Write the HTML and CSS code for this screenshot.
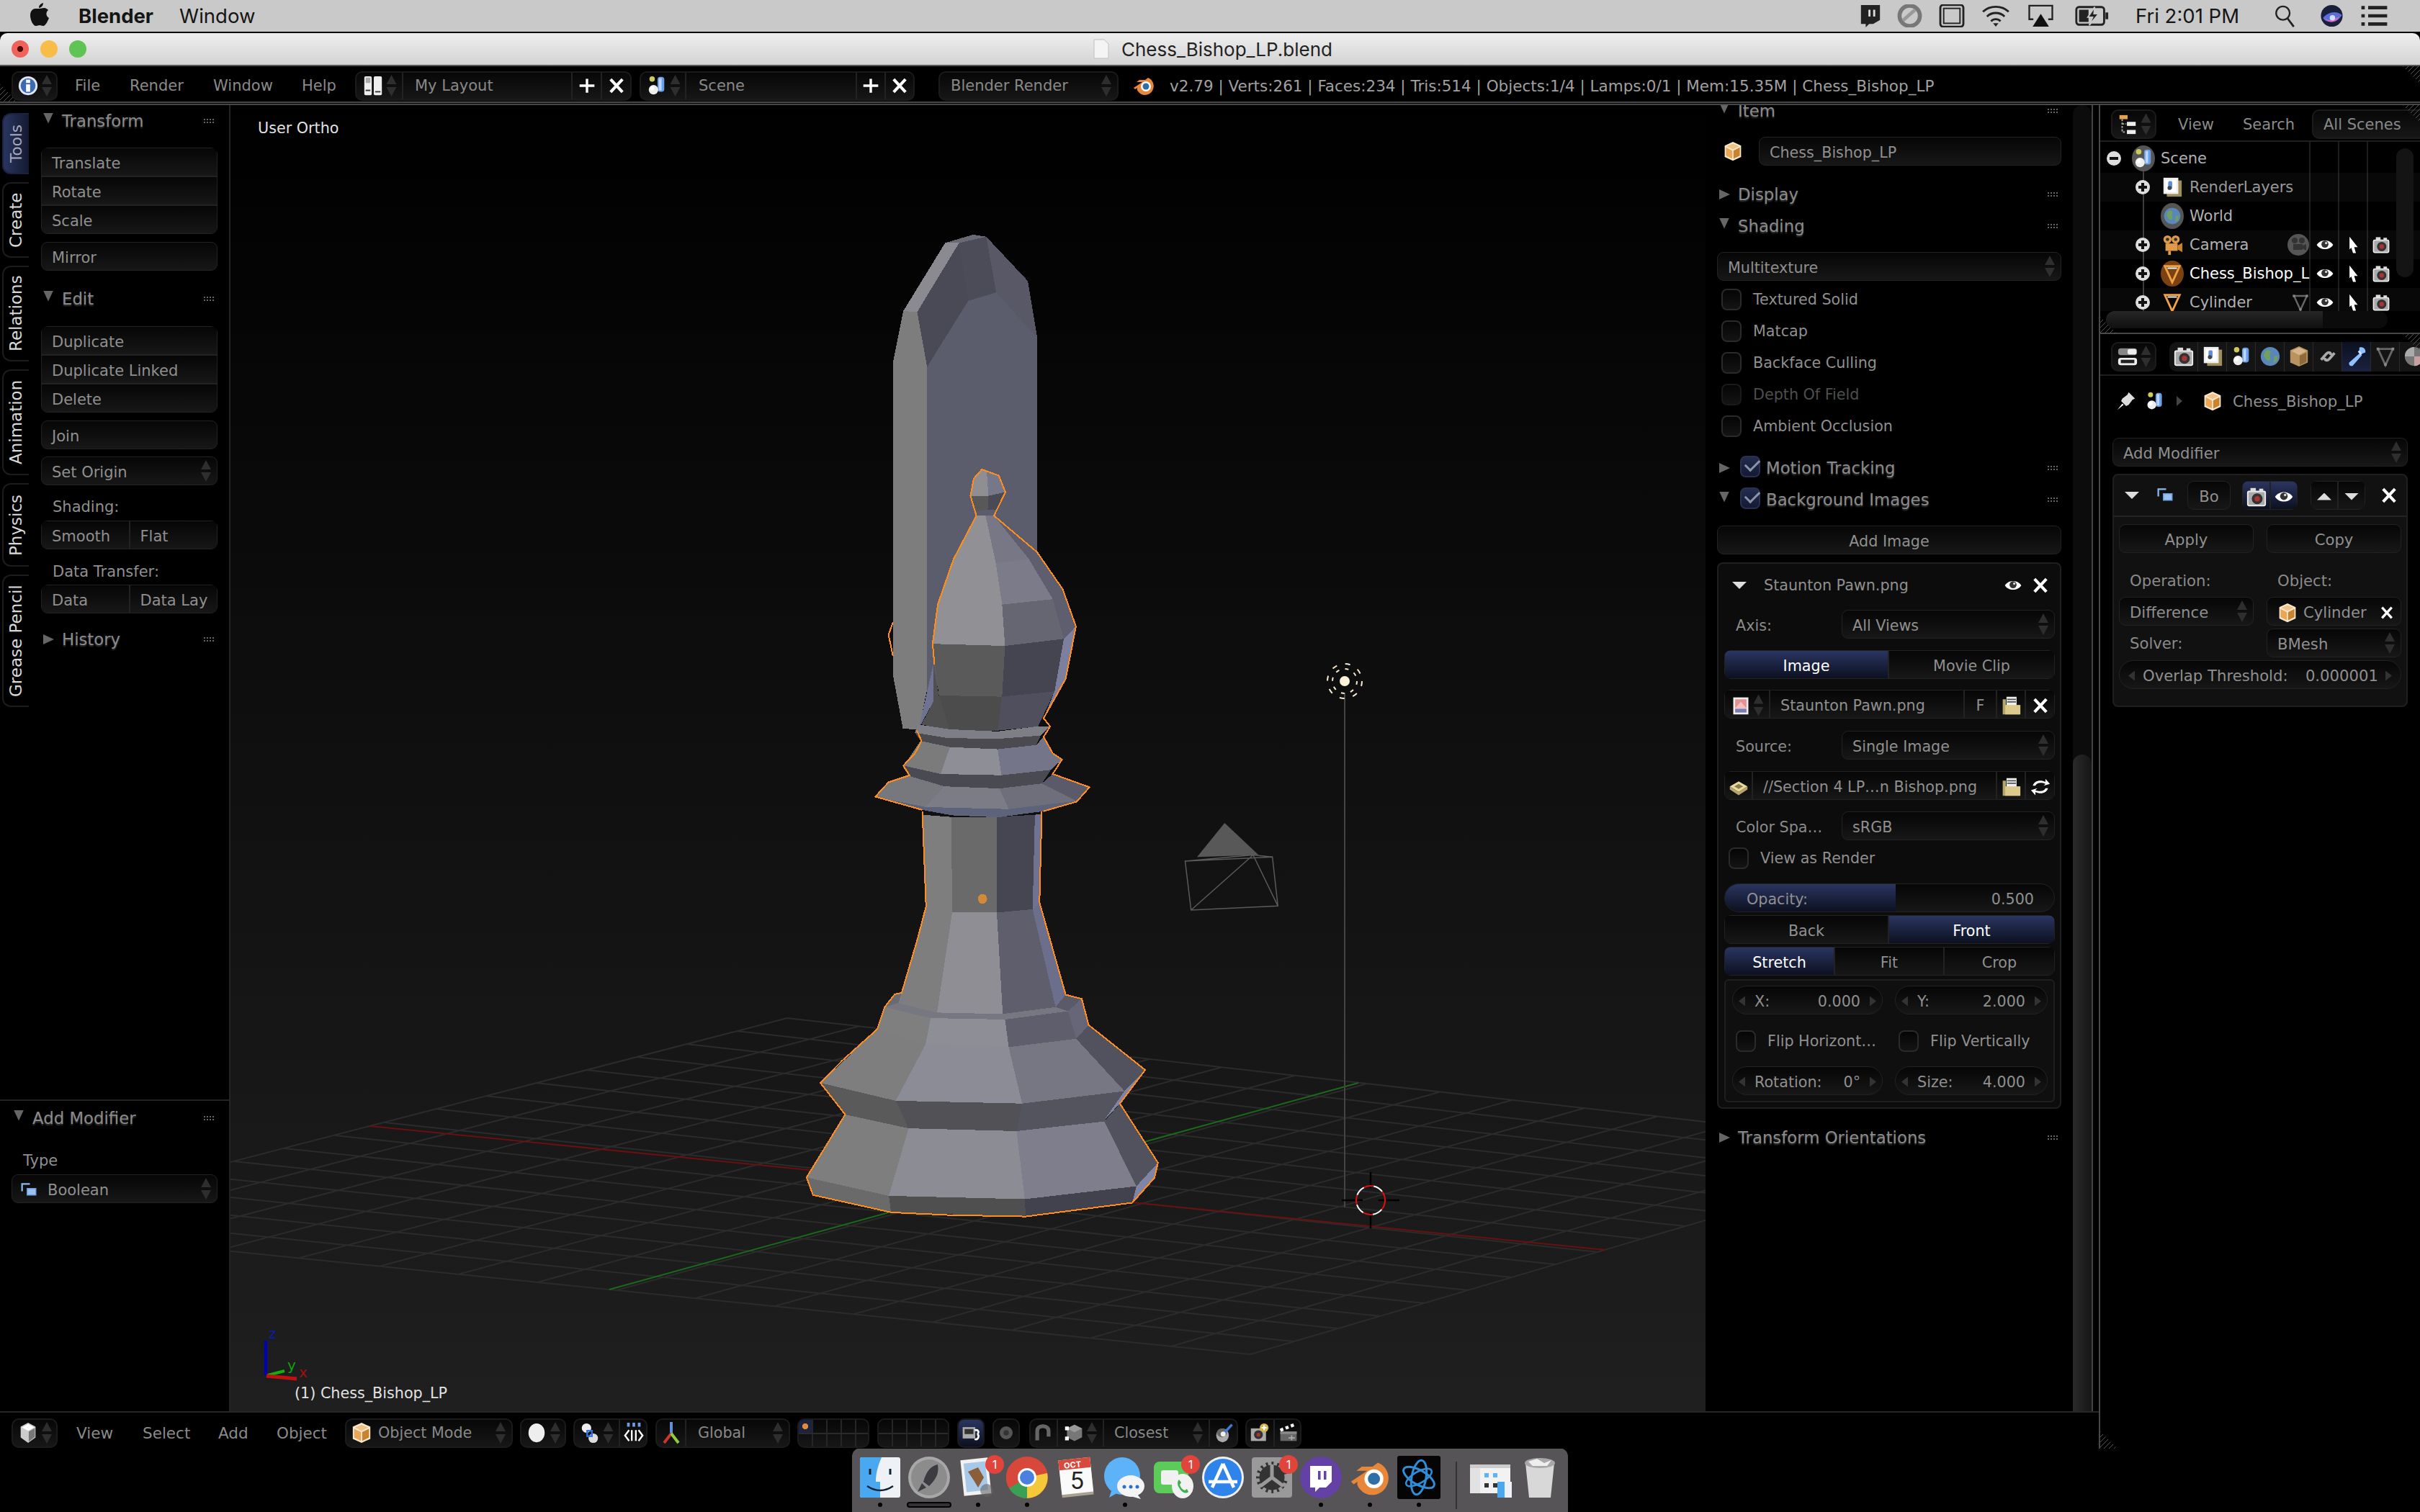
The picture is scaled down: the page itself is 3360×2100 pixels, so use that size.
FILE: index.html
```html
<!DOCTYPE html>
<html lang="en">
<head>
<meta charset="utf-8">
<title>Chess_Bishop_LP.blend</title>
<link rel="stylesheet" href="styles.css">
</head>
<body>
<svg class="defs" width="0" height="0" aria-hidden="true">
  <symbol id="s-cube" viewBox="0 0 32 32"><polygon points="16,1 29,7 29,25 16,31 3,25 3,7" fill="#f6e7cf"/><polygon points="16,4 26,8 16,13 6,8" fill="#f2c387"/><polygon points="5,10 15,15 15,28 5,23" fill="#eaa557"/><polygon points="17,15 27,10 27,23 17,28" fill="#c9832f"/></symbol>
  <symbol id="s-eye" viewBox="0 0 32 32"><path d="M2 16C8 6 24 6 30 16C24 26 8 26 2 16Z" fill="#fff"/><circle cx="16" cy="15" r="6" fill="#333"/><circle cx="18" cy="13" r="2" fill="#ddd"/></symbol>
  <symbol id="s-x" viewBox="0 0 32 32"><path d="M4 3L28 29M28 3L4 29" stroke="#fff" stroke-width="6"/></symbol>
  <symbol id="s-plus" viewBox="0 0 32 32"><path d="M16 2V30M1 16H31" stroke="#fff" stroke-width="5"/></symbol>
  <symbol id="s-cursor" viewBox="0 0 32 32"><path d="M10 2L24 20L18 20L21 30L16 30L13 21L10 24Z" fill="#fff"/></symbol>
  <symbol id="s-cam" viewBox="0 0 32 32"><rect x="3" y="8" width="26" height="21" rx="2" fill="#aaa" stroke="#eee" stroke-width="2"/><rect x="7" y="3" width="8" height="5" fill="#ddd"/><rect x="20" y="4" width="6" height="4" fill="#ddd"/><circle cx="17" cy="19" r="8" fill="#333"/><circle cx="17" cy="19" r="4" fill="#a33"/></symbol>
  <symbol id="s-scene" viewBox="0 0 32 32"><circle cx="9" cy="6" r="4" fill="#cfc95a"/><rect x="17" y="3" width="10" height="22" rx="4" fill="#6b9ee6"/><rect x="19" y="5" width="4" height="18" fill="#bcd6fa"/><circle cx="11" cy="22" r="7" fill="#eee"/><circle cx="9" cy="20" r="3" fill="#fff"/></symbol>
  <symbol id="s-layers" viewBox="0 0 32 32"><rect x="8" y="6" width="22" height="24" fill="#a08f5c"/><rect x="3" y="2" width="22" height="24" fill="#eee"/><rect x="6" y="5" width="16" height="18" fill="#fff"/><rect x="10" y="7" width="6" height="12" rx="2" fill="#5f8fda"/><circle cx="12" cy="17" r="3" fill="#444"/></symbol>
  <symbol id="s-world" viewBox="0 0 32 32"><circle cx="16" cy="16" r="14" fill="#5a86b8"/><path d="M9 8C14 5 18 8 16 12C14 15 18 17 15 22C12 24 8 18 6 14Z" fill="#6fa05f"/><path d="M22 16L27 15L26 23L21 26Z" fill="#6fa05f"/></symbol>
  <symbol id="s-mcam" viewBox="0 0 32 32"><circle cx="9" cy="8" r="6" fill="#e09a4c"/><circle cx="21" cy="8" r="6" fill="#e09a4c"/><circle cx="9" cy="8" r="2.5" fill="#333"/><circle cx="21" cy="8" r="2.5" fill="#333"/><rect x="6" y="14" width="18" height="11" fill="#e09a4c"/><path d="M24 17L31 13V27L24 23Z" fill="#c9832f"/><rect x="10" y="25" width="4" height="6" fill="#e09a4c"/></symbol>
  <symbol id="s-gcam" viewBox="0 0 32 32"><circle cx="16" cy="16" r="15" fill="#555"/><circle cx="11" cy="10" r="4" fill="#333"/><circle cx="21" cy="10" r="4" fill="#333"/><rect x="9" y="15" width="13" height="8" fill="#333"/><path d="M22 17L27 15V24L22 21Z" fill="#333"/></symbol>
  <symbol id="s-mesh" viewBox="0 0 32 32"><path d="M5 5H27L16 29Z" fill="none" stroke="#f0a045" stroke-width="3"/><path d="M9 8H23" stroke="#fff" stroke-width="2"/></symbol>
  <symbol id="s-gmesh" viewBox="0 0 32 32"><path d="M5 5H27L16 29Z" fill="none" stroke="#666" stroke-width="3"/><rect x="3" y="3" width="4" height="4" fill="#888"/><rect x="25" y="3" width="4" height="4" fill="#888"/><rect x="14" y="26" width="4" height="4" fill="#888"/></symbol>
  <symbol id="s-outl" viewBox="0 0 32 32"><rect x="4" y="2" width="12" height="6" fill="#e8a24c"/><path d="M8 8V27H14M8 15H14" stroke="#aaa" stroke-width="2" stroke-dasharray="3 2" fill="none"/><rect x="15" y="12" width="13" height="6" fill="#eee"/><rect x="15" y="24" width="13" height="6" fill="#eee"/></symbol>
  <symbol id="s-editor" viewBox="0 0 32 32"><rect x="2" y="4" width="28" height="10" rx="4" fill="#888"/><rect x="16" y="5" width="13" height="8" rx="3" fill="#eee"/><rect x="2" y="18" width="28" height="11" rx="4" fill="#eee"/><rect x="6" y="21" width="20" height="5" fill="#222"/></symbol>
  <symbol id="s-bool" viewBox="0 0 32 32"><path d="M2 6V3H18V6H5V18H2Z" fill="#8db8f0"/><rect x="12" y="12" width="18" height="14" fill="#6f9be0"/><rect x="14" y="14" width="14" height="10" fill="#9cc0f0"/></symbol>
  <symbol id="s-folder" viewBox="0 0 32 32"><rect x="9" y="2" width="16" height="14" fill="#eee"/><path d="M3 6H8V26H30V30H3Z" fill="#b7a56a"/><rect x="7" y="15" width="24" height="15" fill="#dcca8c"/><path d="M10 6H24M10 10H24" stroke="#555" stroke-width="2"/></symbol>
  <symbol id="s-refresh" viewBox="0 0 32 32"><path d="M4 14C6 6 16 4 24 8V3L31 11L21 14L24 11C17 8 10 9 8 14Z" fill="#fff"/><path d="M28 18C26 26 16 28 8 24V29L1 21L11 18L8 21C15 24 22 23 24 18Z" fill="#fff"/></symbol>
  <symbol id="s-img" viewBox="0 0 32 32"><rect x="4" y="3" width="24" height="27" fill="#eee"/><rect x="7" y="6" width="18" height="14" fill="#e88f8f"/><path d="M7 20L16 10L25 20Z" fill="#f2c0c0"/><rect x="7" y="21" width="18" height="6" fill="#7c7cb0"/></symbol>
  <symbol id="s-box" viewBox="0 0 32 32"><path d="M2 15L16 7L30 15L16 24Z" fill="#e8d9a0"/><path d="M2 15L16 24V29L2 20ZM30 15L16 24V29L30 20Z" fill="#b7a56a"/><path d="M9 15L16 11L23 15L16 19Z" fill="#8a7c4c"/></symbol>
  <symbol id="s-pin" viewBox="0 0 32 32"><path d="M20 2L30 12L26 14L20 22L16 24L8 16L10 12L18 6Z" fill="#ddd"/><path d="M10 20L2 30L12 22Z" fill="#fff"/></symbol>
  <symbol id="s-link" viewBox="0 0 32 32"><path d="M6 21L14 12C17 9 21 10 20 14M26 11L18 20C15 23 11 22 12 18" stroke="#aaa" stroke-width="4" fill="none"/></symbol>
  <symbol id="s-wrench" viewBox="0 0 32 32"><path d="M20 3C25 1 30 5 29 10L24 12L20 8ZM21 11L24 14L10 30C6 31 4 28 5 25Z" fill="#8fc0ff"/><path d="M19 8L23 13" stroke="#cfe4ff" stroke-width="3"/></symbol>
  <symbol id="s-mat" viewBox="0 0 32 32"><circle cx="16" cy="16" r="14" fill="#777"/><path d="M16 16H30A14 14 0 0 1 16 30Z" fill="#c9a0a0"/><path d="M16 16V2A14 14 0 0 0 2 16Z" fill="#aaa"/></symbol>
  <symbol id="s-gbox" viewBox="0 0 32 32"><polygon points="16,1 29,7 29,25 16,31 3,25 3,7" fill="#b8935f"/><polygon points="16,3 27,8 16,14 5,8" fill="#d6b58a"/><polygon points="17,15 27,10 27,24 17,29" fill="#8d6a3c"/></symbol>
  <symbol id="s-solid" viewBox="0 0 32 32"><polygon points="16,1 27,7 27,23 16,31 5,23 5,7" fill="#ccc"/><polygon points="16,3 25,8 16,13 7,8" fill="#fff"/><polygon points="17,14 26,9 26,22 17,29" fill="#777"/></symbol>
  <symbol id="s-ball" viewBox="0 0 32 32"><ellipse cx="16" cy="16" rx="12" ry="14" fill="#eee"/></symbol>
  <symbol id="s-pivot" viewBox="0 0 32 32"><circle cx="11" cy="9" r="7" fill="#eee"/><circle cx="21" cy="24" r="7" fill="#ddd"/><rect x="12" y="13" width="7" height="8" fill="none" stroke="#2f72e0" stroke-width="2.5"/></symbol>
  <symbol id="s-manip" viewBox="0 0 32 32"><rect x="6" y="1" width="4" height="6" fill="#6f9be0"/><rect x="14" y="1" width="4" height="6" fill="#6f9be0"/><rect x="22" y="1" width="4" height="6" fill="#6f9be0"/><path d="M9 12L3 20L9 28M23 12L29 20L23 28M13 12V28M19 12V28" stroke="#fff" stroke-width="2.5" fill="none"/></symbol>
  <symbol id="s-axes" viewBox="0 0 32 32"><path d="M16 1V17" stroke="#5f8fda" stroke-width="4"/><path d="M16 17L6 30" stroke="#c9362e" stroke-width="4"/><path d="M16 17L26 30" stroke="#8fcf3f" stroke-width="4"/></symbol>
  <symbol id="s-lock" viewBox="0 0 32 32"><rect x="3" y="7" width="20" height="18" fill="#aaa"/><rect x="6" y="10" width="14" height="8" fill="#333"/><path d="M22 12C28 10 30 16 26 18M26 18C30 20 28 28 22 26" stroke="#fff" stroke-width="3" fill="none"/></symbol>
  <symbol id="s-dot" viewBox="0 0 32 32"><circle cx="16" cy="16" r="12" fill="#555"/><circle cx="16" cy="16" r="5" fill="#333"/></symbol>
  <symbol id="s-magnet" viewBox="0 0 32 32"><path d="M7 28V13C7 3 25 3 25 13V22" stroke="#666" stroke-width="6" fill="none"/></symbol>
  <symbol id="s-snap" viewBox="0 0 32 32"><polygon points="17,3 29,9 29,23 17,29 5,23 5,9" fill="#777"/><polygon points="17,3 29,9 17,15 5,9" fill="#999"/><rect x="2" y="6" width="6" height="6" fill="#fff"/><rect x="2" y="22" width="6" height="6" fill="#fff"/></symbol>
  <symbol id="s-proj" viewBox="0 0 32 32"><ellipse cx="13" cy="20" rx="10" ry="11" fill="#aaa"/><ellipse cx="12" cy="16" rx="8" ry="7" fill="#666"/><path d="M14 18L28 3" stroke="#3f7ad8" stroke-width="4"/><circle cx="14" cy="18" r="4" fill="#eee"/></symbol>
  <symbol id="s-rcam" viewBox="0 0 32 32"><rect x="2" y="9" width="24" height="20" fill="#aaa"/><circle cx="14" cy="19" r="7" fill="#333"/><circle cx="14" cy="19" r="3" fill="#a33"/><circle cx="23" cy="8" r="7" fill="#d8b545"/><path d="M23 4V12M19 8H27" stroke="#fff" stroke-width="2.5"/></symbol>
  <symbol id="s-clap" viewBox="0 0 32 32"><path d="M3 12L28 2" stroke="#fff" stroke-width="5" stroke-dasharray="5 4"/><rect x="3" y="14" width="26" height="15" fill="#666"/><rect x="3" y="14" width="26" height="4" fill="#888"/><path d="M16 24H26M21 20V28" stroke="#aaa" stroke-width="2"/></symbol>
  <symbol id="s-blender" viewBox="0 0 32 32"><path d="M2 19L14 11H6L10 8H18L22 5C29 8 32 16 28 23C24 30 14 31 9 25C7 23 6 21 7 19L4 21Z" fill="#e8873a"/><circle cx="19" cy="17" r="7" fill="#fff"/><circle cx="19" cy="17" r="4.5" fill="#2f6fa8"/></symbol>
  <symbol id="s-layout" viewBox="0 0 32 32"><rect x="3" y="2" width="11" height="28" rx="2" fill="#eee"/><rect x="17" y="2" width="12" height="28" rx="2" fill="#eee"/><rect x="5" y="4" width="7" height="8" fill="#aaa"/><rect x="5" y="22" width="7" height="2" fill="#333"/><rect x="19" y="24" width="8" height="2" fill="#333"/></symbol>
  <symbol id="s-info" viewBox="0 0 32 32"><circle cx="16" cy="16" r="14" fill="#dfe8f8"/><circle cx="16" cy="16" r="11" fill="#3d6ab0"/><rect x="13" y="14" width="6" height="11" fill="#fff"/><rect x="13" y="7" width="6" height="5" fill="#fff"/></symbol>
</svg>

<div class="screen">
  <header class="macbar">
    <svg class="apple" viewBox="0 0 26 32"><path d="M18 0C18 4 15 7 12 7C12 3 15 1 18 0ZM13 8C15 8 17 7 19 7C22 7 24 9 25 10C21 13 22 19 26 21C24 26 21 32 18 32C16 32 15 31 13 31C11 31 10 32 8 32C4 32 0 24 0 17C0 11 4 8 7 8C9 8 11 8 13 8Z" fill="#111"/></svg>
    <span class="mac-app">Blender</span>
    <span class="mac-item">Window</span>
    <div class="mac-right">
      <svg class="st st-twitch" viewBox="0 0 30 34"><path d="M1 1H29V23L19 29H13L8 34V29H1Z" fill="#222"/><rect x="12" y="8" width="3" height="10" fill="#ddd"/><rect x="19" y="8" width="3" height="10" fill="#ddd"/></svg>
      <svg class="st st-cc" viewBox="0 0 40 34"><circle cx="20" cy="17" r="15" fill="none" stroke="#777" stroke-width="6"/><path d="M10 24L28 8" stroke="#999" stroke-width="5"/></svg>
      <svg class="st st-tab" viewBox="0 0 36 34"><rect x="1" y="1" width="34" height="32" rx="4" fill="none" stroke="#222" stroke-width="3"/><rect x="6" y="6" width="24" height="22" fill="none" stroke="#222" stroke-width="2"/></svg>
      <svg class="st st-wifi" viewBox="0 0 42 34"><path d="M2 11C12 1 30 1 40 11M8 18C15 11 27 11 34 18M14 25C18 21 24 21 28 25" fill="none" stroke="#222" stroke-width="3"/><path d="M21 33L17 28H25Z" fill="#222"/></svg>
      <svg class="st st-air" viewBox="0 0 38 34"><path d="M8 22H2V2H36V22H30" fill="none" stroke="#222" stroke-width="2.5"/><path d="M19 14L31 33H7Z" fill="#111"/></svg>
      <svg class="st st-bat" viewBox="0 0 48 34"><rect x="1" y="4" width="41" height="26" rx="4" fill="none" stroke="#222" stroke-width="3"/><path d="M44 12V22H48V12Z" fill="#222"/><rect x="5" y="8" width="14" height="18" fill="#222"/><path d="M28 4L18 19H25L20 31L34 14H27Z" fill="#222" stroke="#c8c8c8" stroke-width="2"/></svg>
      <span class="mac-clock">Fri 2:01 PM</span>
      <svg class="st st-search" viewBox="0 0 30 34"><circle cx="12" cy="13" r="10" fill="none" stroke="#222" stroke-width="2.5"/><path d="M19 21L28 33" stroke="#222" stroke-width="3"/></svg>
      <svg class="st st-siri" viewBox="0 0 34 34"><ellipse cx="17" cy="17" rx="16" ry="16" fill="#1a1f3c"/><path d="M4 20C10 12 24 8 32 16C28 22 24 26 16 26C10 26 6 24 4 20Z" fill="#5a6ed8"/><path d="M6 20C12 26 20 22 28 18C26 26 12 30 6 20Z" fill="#d868c0"/><circle cx="18" cy="20" r="4" fill="#cfe0ff"/></svg>
      <svg class="st st-list" viewBox="0 0 38 34"><path d="M0 5H5M10 5H38M0 17H5M10 17H38M0 29H5M10 29H38" stroke="#222" stroke-width="5"/></svg>
    </div>
  </header>

  <div class="titlebar">
    <div class="lights"><i class="light red"></i><i class="light yellow"></i><i class="light green"></i></div>
    <div class="title"><svg class="docicon" viewBox="0 0 24 28"><path d="M2 1H16L22 7V27H2Z" fill="#f4f4f4" stroke="#c0c0c0"/></svg><span>Chess_Bishop_LP.blend</span></div>
  </div>

  <div class="infobar hdr">
    <span class="hatch hatch-tl"></span>
    <div class="hbox w64 ml16"><svg class="ic30"><use href="#s-info"/></svg><i class="ud"></i></div>
    <div class="menu ml24"><span class="w76">File</span><span class="w116">Render</span><span class="w123">Window</span><span class="w74">Help</span></div>
    <div class="hbox w384">
      <span class="cell w63"><svg class="ic30"><use href="#s-layout"/></svg><i class="ud"></i></span>
      <span class="cell grow pl16">My Layout</span>
      <span class="cell w41"><svg class="ic22"><use href="#s-plus"/></svg></span>
      <span class="cell w41"><svg class="ic22"><use href="#s-x"/></svg></span>
    </div>
    <div class="hbox w382 ml11">
      <span class="cell w61"><svg class="ic30"><use href="#s-scene"/></svg><i class="ud"></i></span>
      <span class="cell grow pl17">Scene</span>
      <span class="cell w40"><svg class="ic22"><use href="#s-plus"/></svg></span>
      <span class="cell w40"><svg class="ic22"><use href="#s-x"/></svg></span>
    </div>
    <div class="hbox w250 ml33 pl15">Blender Render<i class="ud ud-r"></i></div>
    <svg class="ic32 ml19"><use href="#s-blender"/></svg>
    <span class="status">v2.79 | Verts:261 | Faces:234 | Tris:514 | Objects:1/4 | Lamps:0/1 | Mem:15.35M | Chess_Bishop_LP</span>
    <span class="hatch hatch-tr"></span>
  </div>

  <div class="workspace">
    <div class="leftblock">
      <div class="upper">
        <div class="toolcol">
          <div class="toolmain">
            <nav class="tabs">
              <span class="tab tab-on h85">Tools</span>
              <span class="tab h105">Create</span>
              <span class="tab h133">Relations</span>
              <span class="tab h147">Animation</span>
              <span class="tab h116">Physics</span>
              <span class="tab h184">Grease Pencil</span>
            </nav>
            <div class="shelf">
              <div class="hd"><i class="tri-d"></i><span>Transform</span><i class="grip"></i></div>
              <div class="stack mt15"><div class="b">Translate</div><div class="b">Rotate</div><div class="b">Scale</div></div>
              <div class="b solo mt11">Mirror</div>
              <div class="hd mt17"><i class="tri-d"></i><span>Edit</span><i class="grip"></i></div>
              <div class="stack mt16"><div class="b">Duplicate</div><div class="b">Duplicate Linked</div><div class="b">Delete</div></div>
              <div class="b solo mt11">Join</div>
              <div class="b solo mt10">Set Origin<i class="ud ud-r"></i></div>
              <div class="lab mt14">Shading:</div>
              <div class="pair mt3"><div class="b">Smooth</div><div class="b">Flat</div></div>
              <div class="lab mt15">Data Transfer:</div>
              <div class="pair mt2"><div class="b">Data</div><div class="b">Data Lay</div></div>
              <div class="hd mt14"><i class="tri-r"></i><span>History</span><i class="grip"></i></div>
            </div>
          </div>
          <div class="oppanel">
            <div class="hd"><i class="tri-d"></i><span>Add Modifier</span><i class="grip"></i></div>
            <div class="lab mt21">Type</div>
            <div class="b solo mt3 opcombo"><svg class="ic24 mr14"><use href="#s-bool"/></svg>Boolean<i class="ud ud-r"></i></div>
          </div>
        </div>

        <main class="viewport">
          <svg class="scene3d" viewBox="320 146 2048 1816" width="2048" height="1816">
            <path class="grid" d="M-24 1703L1736 1881M46 1685L1796 1863M116 1667L1857 1845M185 1649L1917 1828M255 1631L1978 1810M325 1613L2038 1792M395 1595L2098 1774M465 1577L2159 1756M534 1559L2219 1739M604 1540L2280 1721M674 1522L2340 1703M744 1504L2400 1685M814 1486L2461 1667M883 1468L2521 1650M953 1450L2582 1632M1023 1432L2642 1614M1093 1414L2703 1596M-24 1703L1093 1414M86 1714L1194 1425M196 1725L1294 1437M306 1736L1395 1448M416 1747L1495 1460M526 1759L1596 1471M636 1770L1697 1482M746 1781L1797 1494M856 1792L1898 1505M966 1803L1998 1517M1076 1814L2099 1528M1186 1825L2200 1539M1296 1836L2300 1551M1406 1847L2401 1562M1516 1858L2501 1574M1626 1870L2602 1585M1736 1881L2703 1596"/>
            <path class="axis-r" d="M514 1564L2229 1736"/>
            <path class="axis-g" d="M846 1791L1886 1504"/>

            <!-- stem and base -->
            <g transform="translate(1000 1150) scale(0.6378 0.3827)" shape-rendering="crispEdges">
              <polygon fill="#7e7e7e" points="440,-48 503,-40 505,305 448,285"/>
              <polygon fill="#6a6a6a" points="503,-40 602,-40 602,307 505,305"/>
              <polygon fill="#464652" points="602,-40 685,-48 680,295 602,307"/>
              <polygon fill="#6f7391" points="685,-48 700,-50 695,270 680,295"/>
              <polygon fill="#7e7e7e" points="448,285 505,305 472,670 388,635"/>
              <polygon fill="#8e8e94" points="505,305 602,307 615,675 472,670"/>
              <polygon fill="#5e5e6c" points="602,307 680,295 730,650 615,675"/>
              <polygon fill="#6b6f8c" points="680,295 695,270 752,605 730,650"/>
              <polygon fill="#777782" points="388,635 472,670 615,675 730,650 757,665 620,695 458,690 358,650"/>
              <polygon fill="#6a6a72" points="380,603 395,598 388,635 358,650"/>
              <polygon fill="#5a5a68" points="752,605 787,620 757,665 730,650"/>
              <polygon fill="#7f7f7f" points="358,650 458,690 447,785 342,730"/>
              <polygon fill="#8e8e96" points="458,690 620,695 628,795 447,785"/>
              <polygon fill="#5e5e6c" points="620,695 757,665 775,765 628,795"/>
              <polygon fill="#666678" points="757,665 787,620 802,715 775,765"/>
              <polygon fill="#7e7e7e" points="342,730 447,785 382,990 218,925"/>
              <polygon fill="#8c8c96" points="447,785 628,795 657,1000 382,990"/>
              <polygon fill="#777784" points="628,795 775,765 880,955 657,1000"/>
              <polygon fill="#52525f" points="775,765 802,715 925,878 880,955"/>
              <polygon fill="#5a5a5a" points="218,925 382,990 410,1090 272,1040"/>
              <polygon fill="#515156" points="382,990 657,1000 645,1100 410,1090"/>
              <polygon fill="#54545f" points="657,1000 880,955 836,1065 645,1100"/>
              <polygon fill="#8085a5" points="925,878 880,955 836,1060 870,1000"/>
              <polygon fill="#7e7e7e" points="272,1040 410,1090 367,1335 188,1268"/>
              <polygon fill="#8c8c94" points="410,1090 645,1100 663,1347 367,1335"/>
              <polygon fill="#7e7e8c" points="645,1100 836,1065 906,1300 663,1347"/>
              <polygon fill="#52525f" points="836,1065 870,1000 953,1215 906,1300"/>
              <polygon fill="#6a6a6a" points="188,1268 367,1335 372,1395 202,1332"/>
              <polygon fill="#4f4f4f" points="367,1335 663,1347 665,1410 372,1395"/>
              <polygon fill="#42424e" points="663,1347 906,1300 897,1360 665,1410"/>
              <polygon fill="#8085a5" points="906,1300 953,1215 945,1270 897,1360"/>
              <polyline class="outline" points="440,-60 448,285 430,400 395,598 380,603 358,650 342,730 265,845 218,925 272,1040 188,1268 202,1332 372,1395 500,1405 665,1410 897,1360 945,1270 953,1215 870,1000 925,878 802,715 787,620 752,605 695,270 700,-60"/>
              <ellipse cx="571" cy="257" rx="10" ry="18" fill="#d08a3a"/>
            </g>

            <!-- back object and head -->
            <g transform="translate(1000 280) scale(0.5102 0.574)" shape-rendering="crispEdges">
              <polygon fill="#7d7d7d" points="498,265 536,267 563,400 563,1180 540,1278 497,1275 470,1145 470,390"/>
              <polygon fill="#8a8a90" points="612,100 650,100 536,267 498,265"/>
              <polygon fill="#6a6a75" points="612,100 688,80 724,85 650,100"/>
              <polygon fill="#4a4a56" points="650,100 675,240 563,400 536,267"/>
              <polygon fill="#4c4c58" points="650,100 724,85 751,220 675,240"/>
              <polygon fill="#585866" points="724,85 837,192 863,330 751,220"/>
              <polygon fill="#5c5d6c" points="675,240 751,220 863,330 863,900 563,1200 563,400"/>
              <polyline class="outline" points="470,1018 458,1048 470,1100"/>
              <polygon fill="#8e8e93" points="712,650 725,650 730,712 681,712 690,670"/>
              <polygon fill="#77778a" points="725,650 758,663 776,703 730,712"/>
              <polygon fill="#585858" points="681,712 730,712 728,745 697,750"/>
              <polygon fill="#4a4a56" points="730,712 776,703 755,745 728,745"/>
              <polygon fill="#909095" points="697,760 722,760 752,875 767,975 775,1075 578,1070 592,975 635,865"/>
              <polygon fill="#777785" points="722,760 745,760 862,848 840,865 750,875"/>
              <polygon fill="#7b7b89" points="750,875 840,865 905,962 767,975"/>
              <polygon fill="#666672" points="767,975 905,962 935,1058 775,1075"/>
              <polygon fill="#5e5e6e" points="745,760 862,848 932,938 968,1028 935,1058 905,962 840,865"/>
              <polygon fill="#5a5a5a" points="578,1070 775,1075 767,1198 595,1195"/>
              <polygon fill="#454552" points="775,1075 935,1058 910,1185 767,1198"/>
              <polygon fill="#7c7f9e" points="968,1028 935,1058 910,1185 880,1250 940,1155"/>
              <polygon fill="#6f7391" points="580,1120 540,1275 580,1210"/>
              <polygon fill="#505050" points="580,1120 595,1195 625,1280 548,1265 580,1210"/>
              <polygon fill="#4c4c4c" points="595,1195 767,1198 755,1280 625,1280"/>
              <polygon fill="#4f4f5d" points="767,1198 910,1185 865,1270 755,1280"/>
              <polygon fill="#7e7e86" points="537,1265 625,1277 755,1282 860,1270 898,1270 872,1292 755,1300 618,1298 530,1285"/>
              <polygon fill="#4b4b4f" points="530,1285 618,1298 755,1300 872,1292 860,1315 755,1325 625,1320 545,1305"/>
              <polygon fill="#7b7b7b" points="545,1305 625,1320 600,1385 500,1365"/>
              <polygon fill="#8e8e96" points="625,1320 755,1325 765,1388 600,1385"/>
              <polygon fill="#75758a" points="755,1325 860,1315 880,1295 905,1335 930,1350 900,1375 765,1388"/>
              <polygon fill="#4a4a52" points="500,1365 600,1385 765,1388 900,1375 875,1408 760,1420 610,1415 515,1395"/>
              <polygon fill="#77777e" points="422,1440 458,1405 515,1390 610,1415 558,1465"/>
              <polygon fill="#7c7c86" points="610,1415 760,1420 785,1470 558,1465"/>
              <polygon fill="#6f6f7c" points="760,1420 875,1408 970,1450 785,1470"/>
              <polygon fill="#5a5a6a" points="875,1408 905,1385 1005,1417 970,1450"/>
              <polygon fill="#5e637c" points="422,1440 558,1465 785,1470 970,1450 880,1475 755,1490 630,1485 550,1472"/>
              <polyline class="outline" points="697,760 635,865 592,975 578,1070 583,1120"/>
              <polyline class="outline" points="697,760 681,712 690,670 712,648 758,663 776,703 745,760 862,848 932,938 968,1028 940,1155 880,1250 898,1270 880,1295 905,1335 930,1350 905,1385 1005,1417 970,1452 880,1475"/>
              <polyline class="outline" points="535,1280 548,1305 530,1335 498,1365 515,1388 458,1405 422,1440 550,1472"/>
            </g>

            <!-- camera -->
            <g transform="translate(1000 1150) scale(0.6378 0.3827)">
              <polygon fill="#585858" points="1098,-18 1038,105 1172,98"/>
              <path class="wire" d="M1012 120L1202 105L1214 283L1025 298ZM1160 98L1025 298M1160 98L1214 283M1160 98L1012 120M1160 98L1202 105"/>
            </g>

            <!-- lamp -->
            <path class="lampline" d="M1867 962V1677"/>
            <circle class="sun-in" cx="1867" cy="946" r="17"/>
            <circle class="sun-out" cx="1867" cy="946" r="24"/>
            <circle cx="1867" cy="946" r="7" fill="#fff3dc"/>

            <!-- 3d cursor -->
            <path class="cross" d="M1903 1628V1650M1903 1684V1706M1863 1667H1892M1914 1667H1943"/>
            <circle class="cur-r" cx="1903" cy="1667" r="20"/>
            <circle class="cur-w" cx="1903" cy="1667" r="20"/>

            <!-- gizmo -->
            <path class="gz-b" d="M369 1910V1862"/>
            <path class="gz-g" d="M372 1910L395 1904"/>
            <path class="gz-r" d="M370 1911L412 1915"/>
          </svg>
          <span class="vp-text vp-mode">User Ortho</span>
          <span class="vp-text vp-obj">(1) Chess_Bishop_LP</span>
          <span class="gz-l gz-lx">x</span>
          <span class="gz-l gz-ly">y</span>
          <span class="gz-l gz-lz">z</span>
        </main>

        <section class="npanel">
          <div class="hd nudge"><i class="tri-d"></i><span>Item</span><i class="grip"></i></div>
          <div class="namerow mt14"><svg class="ic28"><use href="#s-cube"/></svg><div class="b solo field">Chess_Bishop_LP</div></div>
          <div class="hd mt18"><i class="tri-r"></i><span>Display</span><i class="grip"></i></div>
          <div class="hd"><i class="tri-d"></i><span>Shading</span><i class="grip"></i></div>
          <div class="b solo mt14">Multitexture<i class="ud ud-r"></i></div>
          <div class="chk mt4"><i class="box"></i>Textured Solid</div>
          <div class="chk"><i class="box"></i>Matcap</div>
          <div class="chk"><i class="box"></i>Backface Culling</div>
          <div class="chk dim"><i class="box"></i>Depth Of Field</div>
          <div class="chk"><i class="box"></i>Ambient Occlusion</div>
          <div class="hd mt14"><i class="tri-r"></i><i class="box on"></i><span>Motion Tracking</span><i class="grip"></i></div>
          <div class="hd"><i class="tri-d"></i><i class="box on"></i><span>Background Images</span><i class="grip"></i></div>
          <div class="b solo ctr mt14">Add Image</div>

          <div class="sub mt11">
            <div class="subhead"><i class="tri-w"></i><span class="grow">Staunton Pawn.png</span><svg class="ic26 mr14"><use href="#s-eye"/></svg><svg class="ic22"><use href="#s-x"/></svg></div>
            <div class="lr mt12"><span class="lrl">Axis:</span><div class="b solo cmb">All Views<i class="ud ud-r"></i></div></div>
            <div class="seg mt16 seg2"><div class="b on ctr">Image</div><div class="b ctr">Movie Clip</div></div>
            <div class="seg mt15 imgrow"><div class="b ctr"><svg class="ic28"><use href="#s-img"/></svg><i class="ud"></i></div><div class="b">Staunton Pawn.png</div><div class="b ctr">F</div><div class="b ctr"><svg class="ic28"><use href="#s-folder"/></svg></div><div class="b ctr"><svg class="ic22"><use href="#s-x"/></svg></div></div>
            <div class="lr mt17"><span class="lrl">Source:</span><div class="b solo cmb">Single Image<i class="ud ud-r"></i></div></div>
            <div class="seg mt16 pathrow"><div class="b ctr"><svg class="ic28"><use href="#s-box"/></svg></div><div class="b">//Section 4 LP…n Bishop.png</div><div class="b ctr"><svg class="ic28"><use href="#s-folder"/></svg></div><div class="b ctr"><svg class="ic28"><use href="#s-refresh"/></svg></div></div>
            <div class="lr mt16"><span class="lrl">Color Spa…</span><div class="b solo cmb">sRGB<i class="ud ud-r"></i></div></div>
            <div class="chk mt5 vr"><i class="box"></i>View as Render</div>
            <div class="slider mt15"><i class="fill"></i><span class="sl-l">Opacity:</span><span class="sl-v">0.500</span></div>
            <div class="seg mt4 seg2"><div class="b ctr">Back</div><div class="b on ctr">Front</div></div>
            <div class="seg mt4 seg3"><div class="b on ctr">Stretch</div><div class="b ctr">Fit</div><div class="b ctr">Crop</div></div>
            <div class="inner mt5">
              <div class="numrow"><div class="num"><i class="al"></i><span class="grow">X:</span><span>0.000</span><i class="ar"></i></div><div class="num"><i class="al"></i><span class="grow">Y:</span><span>2.000</span><i class="ar"></i></div></div>
              <div class="numrow fliprow mt17"><div class="chk flip"><i class="box"></i>Flip Horizont…</div><div class="chk flip"><i class="box"></i>Flip Vertically</div></div>
              <div class="numrow mt15"><div class="num"><i class="al"></i><span class="grow">Rotation:</span><span>0°</span><i class="ar"></i></div><div class="num"><i class="al"></i><span class="grow">Size:</span><span>4.000</span><i class="ar"></i></div></div>
            </div>
          </div>
          <div class="hd mt18"><i class="tri-r"></i><span>Transform Orientations</span><i class="grip"></i></div>
        </section>

        <div class="nscroll"><i class="nthumb"></i></div>
      </div>

      <div class="viewhdr hdr">
        <div class="hbox w64 ml16"><svg class="ic30"><use href="#s-solid"/></svg><i class="ud"></i></div>
        <div class="menu ml24"><span class="w92">View</span><span class="w105">Select</span><span class="w81">Add</span><span class="w95">Object</span></div>
        <div class="hbox w233 pl6"><svg class="ic30 mr8"><use href="#s-cube"/></svg>Object Mode<i class="ud ud-r"></i></div>
        <div class="hbox w64 ml10"><svg class="ic30"><use href="#s-ball"/></svg><i class="ud"></i></div>
        <div class="hbox w103 ml10">
          <span class="cell w63"><svg class="ic30"><use href="#s-pivot"/></svg><i class="ud"></i></span>
          <span class="cell w40"><svg class="ic30"><use href="#s-manip"/></svg></span>
        </div>
        <div class="hbox w187 ml11">
          <span class="cell w39"><svg class="ic32"><use href="#s-axes"/></svg></span>
          <span class="cell grow pl16">Global<i class="ud ud-r"></i></span>
        </div>
        <div class="layers ml10"><i class="lay-on"></i></div>
        <div class="layers ml11"></div>
        <div class="hbox w38 ml11 navy"><svg class="ic28"><use href="#s-lock"/></svg></div>
        <div class="hbox w38 ml11"><svg class="ic24"><use href="#s-dot"/></svg></div>
        <div class="hbox w290 ml13">
          <span class="cell w38"><svg class="ic28"><use href="#s-magnet"/></svg></span>
          <span class="cell w64"><svg class="ic28"><use href="#s-snap"/></svg><i class="ud"></i></span>
          <span class="cell w147 pl14">Closest<i class="ud ud-r"></i></span>
          <span class="cell w41"><svg class="ic28"><use href="#s-proj"/></svg></span>
        </div>
        <div class="hbox w78 ml10">
          <span class="cell w39"><svg class="ic28"><use href="#s-rcam"/></svg></span>
          <span class="cell w39"><svg class="ic28"><use href="#s-clap"/></svg></span>
        </div>
      </div>
    </div>

    <div class="rightcol">
      <section class="outliner">
        <div class="rhdr hdr">
          <div class="hbox w63"><svg class="ic30"><use href="#s-outl"/></svg><i class="ud"></i></div>
          <div class="menu ml30"><span class="w90">View</span><span class="w96">Search</span></div>
          <div class="hbox allsc">All Scenes</div>
          <span class="hatch hatch-tr"></span>
        </div>
        <div class="olist">
          <div class="orow root"><i class="exp minus"></i><span class="oic halo"><svg class="ic30"><use href="#s-scene"/></svg></span><span class="oname">Scene</span></div>
          <div class="orow"><i class="exp plus"></i><span class="oic"><svg class="ic30"><use href="#s-layers"/></svg></span><span class="oname dimmer">RenderLayers</span></div>
          <div class="orow"><i class="exp none"></i><span class="oic halo"><svg class="ic26"><use href="#s-world"/></svg></span><span class="oname">World</span></div>
          <div class="orow"><i class="exp plus"></i><span class="oic"><svg class="ic30"><use href="#s-mcam"/></svg></span><span class="oname">Camera</span><svg class="ic32 oex"><use href="#s-gcam"/></svg><span class="vis"><svg class="ic26"><use href="#s-eye"/></svg><svg class="ic26"><use href="#s-cursor"/></svg><svg class="ic26"><use href="#s-cam"/></svg></span></div>
          <div class="orow"><i class="exp plus"></i><span class="oic brown"><svg class="ic30"><use href="#s-mesh"/></svg></span><span class="oname bright">Chess_Bishop_LP</span><span class="vis"><svg class="ic26"><use href="#s-eye"/></svg><svg class="ic26"><use href="#s-cursor"/></svg><svg class="ic26"><use href="#s-cam"/></svg></span></div>
          <div class="orow"><i class="exp plus"></i><span class="oic"><svg class="ic30"><use href="#s-mesh"/></svg></span><span class="oname">Cylinder</span><svg class="ic26 oex"><use href="#s-gmesh"/></svg><span class="vis"><svg class="ic26"><use href="#s-eye"/></svg><svg class="ic26"><use href="#s-cursor"/></svg><svg class="ic26"><use href="#s-cam"/></svg></span></div>
          <i class="ovscroll"></i>
        </div>
        <div class="ohscroll"><i class="ohthumb"></i><span class="hatch hatch-bl"></span></div>
      </section>

      <section class="props">
        <div class="rhdr hdr phdr">
          <div class="hbox w63"><svg class="ic30"><use href="#s-editor"/></svg><i class="ud"></i></div>
          <div class="ptabs">
            <span class="ptab"><svg class="ic30"><use href="#s-cam"/></svg></span>
            <span class="ptab"><svg class="ic30"><use href="#s-layers"/></svg></span>
            <span class="ptab"><svg class="ic30"><use href="#s-scene"/></svg></span>
            <span class="ptab"><svg class="ic30"><use href="#s-world"/></svg></span>
            <span class="ptab"><svg class="ic30"><use href="#s-gbox"/></svg></span>
            <span class="ptab"><svg class="ic30"><use href="#s-link"/></svg></span>
            <span class="ptab active"><svg class="ic30"><use href="#s-wrench"/></svg></span>
            <span class="ptab"><svg class="ic30"><use href="#s-gmesh"/></svg></span>
            <span class="ptab"><svg class="ic30"><use href="#s-mat"/></svg></span>
          </div>
          <span class="hatch hatch-tr"></span>
        </div>
        <div class="crumbs"><svg class="ic28"><use href="#s-pin"/></svg><svg class="ic28 ml12"><use href="#s-scene"/></svg><i class="crumb-tri"></i><svg class="ic28 ml28"><use href="#s-cube"/></svg><span class="ml14">Chess_Bishop_LP</span></div>
        <div class="pbody">
          <div class="b solo mt16">Add Modifier<i class="ud ud-r"></i></div>
          <div class="modifier mt10">
            <div class="modhead">
              <i class="tri-w"></i>
              <svg class="ic24 ml24"><use href="#s-bool"/></svg>
              <div class="b solo ctr bo">Bo</div>
              <div class="seg camvis"><div class="b on ctr"><svg class="ic30"><use href="#s-cam"/></svg></div><div class="b on ctr"><svg class="ic28"><use href="#s-eye"/></svg></div></div>
              <div class="seg updown"><div class="b ctr"><i class="tri-wu"></i></div><div class="b ctr"><i class="tri-w"></i></div></div>
              <svg class="ic22 modx"><use href="#s-x"/></svg>
            </div>
            <div class="modbody">
              <div class="twin"><div class="b solo ctr">Apply</div><div class="b solo ctr">Copy</div></div>
              <div class="twin labs"><span>Operation:</span><span>Object:</span></div>
              <div class="twin"><div class="b solo">Difference<i class="ud ud-r"></i></div><div class="b solo objf"><svg class="ic28 mr8"><use href="#s-cube"/></svg><span class="grow">Cylinder</span><svg class="ic18"><use href="#s-x"/></svg></div></div>
              <div class="twin mt4"><span class="solverlab">Solver:</span><div class="b solo">BMesh<i class="ud ud-r"></i></div></div>
              <div class="num wide mt4"><i class="al"></i><span class="grow">Overlap Threshold:</span><span>0.000001</span><i class="ar"></i></div>
            </div>
          </div>
        </div>
        <span class="hatch hatch-bl"></span>
      </section>
    </div>
  </div>

  <div class="dockrow">
    <div class="dock">
      <div class="app"><svg viewBox="0 0 60 60"><rect x="2" y="2" width="56" height="56" rx="3" fill="#eef2f6"/><path d="M2 5Q2 2 5 2H32C26 16 24 26 24 36H30V58H5Q2 58 2 55Z" fill="#4aa8f0"/><path d="M16 18V26M44 18V26" stroke="#123" stroke-width="3"/><path d="M12 42Q30 54 48 42" stroke="#123" stroke-width="2.5" fill="none"/></svg><i class="run"></i></div>
      <div class="app"><svg viewBox="0 0 60 60"><circle cx="30" cy="30" r="29" fill="#a8a8a8"/><circle cx="30" cy="30" r="25" fill="#8c8c8c"/><path d="M42 12C44 24 40 32 30 42L22 36C26 22 32 14 42 12ZM20 38L26 44L14 50Z" fill="#3b3b40"/></svg><i class="pill"></i></div>
      <div class="app"><svg viewBox="0 0 60 60"><rect x="8" y="4" width="38" height="50" fill="#f2f2f2" transform="rotate(-6 27 30)"/><rect x="12" y="9" width="30" height="40" fill="#a8c8e8" transform="rotate(-6 27 30)"/><path d="M16 22L30 16L38 30L30 44L24 34Z" fill="#8a5e38"/><circle cx="42" cy="48" r="9" fill="#666" opacity=".6"/></svg><i class="run"></i><b class="badge badge-mail">1</b></div>
      <div class="app"><svg viewBox="0 0 60 60"><circle cx="30" cy="30" r="29" fill="#d8483a"/><path d="M30 30L5 45A29 29 0 0 1 5 15Z" fill="#d8483a"/><path d="M30 30L58 24A29 29 0 0 1 30 59Z" fill="#f4c838"/><path d="M30 30L30 59A29 29 0 0 1 5 45Z" fill="#3aa055"/><circle cx="30" cy="30" r="13" fill="#fff"/><circle cx="30" cy="30" r="10" fill="#4a80e0"/></svg><i class="run"></i></div>
      <div class="app"><svg viewBox="0 0 60 60"><rect x="8" y="6" width="44" height="50" fill="#a8a090" transform="rotate(-6 30 30)"/><rect x="8" y="4" width="44" height="48" fill="#fafafa" transform="rotate(-6 30 30)"/><rect x="8" y="4" width="44" height="14" fill="#d84a3c" transform="rotate(-6 30 30)"/><text x="15" y="16" class="cal-m" transform="rotate(-6 30 30)">OCT</text><text x="22" y="46" class="cal-d">5</text></svg><i class="none-dot"></i></div>
      <div class="app"><svg viewBox="0 0 60 60"><ellipse cx="26" cy="28" rx="25" ry="26" fill="#5db2f8"/><path d="M12 46L8 58L22 50Z" fill="#5db2f8"/><ellipse cx="38" cy="42" rx="19" ry="15" fill="#f4f4f4"/><path d="M46 52L52 60L38 56Z" fill="#f4f4f4"/><circle cx="29" cy="43" r="2.5" fill="#2a70d0"/><circle cx="38" cy="43" r="2.5" fill="#2a70d0"/><circle cx="47" cy="43" r="2.5" fill="#2a70d0"/></svg><i class="run"></i></div>
      <div class="app"><svg viewBox="0 0 60 60"><rect x="2" y="8" width="48" height="44" rx="8" fill="#5ccb5a"/><rect x="12" y="20" width="24" height="20" rx="3" fill="#f0f0f0"/><ellipse cx="42" cy="42" rx="15" ry="17" fill="#f2f2f2"/><path d="M37 33L40 37L38 40C39 44 42 47 45 48L48 46L50 50C46 54 40 50 37 44C34 39 35 35 37 33Z" fill="#3cb04a"/></svg><i class="none-dot"></i><b class="badge badge-ft">1</b></div>
      <div class="app"><svg viewBox="0 0 60 60"><circle cx="30" cy="30" r="29" fill="#f0f0f0"/><circle cx="30" cy="30" r="26" fill="#2f84ec"/><path d="M30 11L15 44M30 11L45 44M10 36H50" stroke="#fff" stroke-width="4.5"/></svg><i class="none-dot"></i></div>
      <div class="app"><svg viewBox="0 0 60 60"><rect x="2" y="2" width="56" height="56" rx="4" fill="#9a9a9a"/><circle cx="30" cy="30" r="22" fill="#333"/><circle cx="30" cy="30" r="20" fill="none" stroke="#999" stroke-width="5" stroke-dasharray="5 3"/><path d="M30 30V12M30 30L14 42M30 30L46 42" stroke="#999" stroke-width="5"/></svg><i class="none-dot"></i><b class="badge badge-pr">1</b></div>
      <div class="app"><svg viewBox="0 0 60 60"><circle cx="30" cy="30" r="29" fill="#6441a5"/><path d="M15 14H45V36L37 44H28L22 50V44H15Z" fill="#fff"/><rect x="26" y="21" width="3.5" height="12" fill="#6441a5"/><rect x="34" y="21" width="3.5" height="12" fill="#6441a5"/></svg><i class="run"></i></div>
      <div class="app"><svg viewBox="0 0 60 60"><use href="#s-blender"/></svg><i class="run"></i></div>
      <div class="app"><svg viewBox="0 0 60 60"><rect x="0" y="0" width="60" height="60" rx="3" fill="#050505"/><ellipse cx="30" cy="30" rx="24" ry="10" fill="none" stroke="#2e8fd8" stroke-width="3" transform="rotate(30 30 30)"/><ellipse cx="30" cy="30" rx="24" ry="10" fill="none" stroke="#2e8fd8" stroke-width="3" transform="rotate(100 30 30)"/><ellipse cx="30" cy="30" rx="20" ry="8" fill="none" stroke="#2e8fd8" stroke-width="2.5" transform="rotate(-30 30 30)"/></svg><i class="run"></i></div>
      <i class="docksep"></i>
      <div class="app win"><svg viewBox="0 0 60 60"><rect x="0" y="12" width="56" height="40" fill="#f2f2f2"/><rect x="0" y="12" width="56" height="5" fill="#ccc"/><rect x="0" y="17" width="14" height="35" fill="#e2e2e2"/><rect x="20" y="24" width="6" height="6" fill="#5db2f8"/><rect x="32" y="24" width="6" height="6" fill="#5db2f8"/><rect x="20" y="38" width="6" height="6" fill="#333"/><rect x="32" y="38" width="6" height="6" fill="#333"/><rect x="38" y="36" width="20" height="22" fill="#4aa8f0"/><rect x="48" y="36" width="10" height="22" fill="#eef2f6"/></svg><i class="none-dot"></i></div>
      <div class="app"><svg viewBox="0 0 60 60"><path d="M10 10H50L45 58H15Z" fill="#d8d8d8"/><ellipse cx="30" cy="10" rx="21" ry="7" fill="#a8a8a8"/><path d="M14 8L26 4L36 10L46 6L40 14L20 14Z" fill="#eee"/></svg><i class="none-dot"></i></div>
    </div>
  </div>
</div>
</body>
</html>
```
FILE: styles.css
```css
*{box-sizing:border-box}
html,body{margin:0;padding:0;background:#000}
body{font-family:"DejaVu Sans",sans-serif;font-size:20.7px;color:#8f8f8f}
.defs{position:absolute}
i{display:block;flex:none}
svg{display:block;flex:none}
.screen{width:3360px;height:2100px;display:flex;flex-direction:column;overflow:hidden;background:#000}

/* mac menu bar */
.macbar{height:44px;margin-bottom:2px;background:#c9c9c9;display:flex;align-items:center;color:#151515;font-family:Inter,"Liberation Sans",sans-serif;font-size:27.5px}
.apple{width:26px;height:32px;margin-left:42px;margin-top:-4px}
.mac-app{font-weight:700;margin-left:41px}
.mac-item{margin-left:36px}
.mac-right{margin-left:auto;display:flex;align-items:center;padding-right:45px}
.st{height:32px}
.st-twitch{width:30px}
.st-cc{width:39px;margin-left:20px}
.st-tab{width:36px;margin-left:21px}
.st-wifi{width:42px;margin-left:22px}
.st-air{width:37px;margin-left:23px}
.st-bat{width:47px;margin-left:29px}
.mac-clock{margin-left:37px;white-space:nowrap}
.st-search{width:29px;margin-left:49px}
.st-siri{width:33px;margin-left:34px}
.st-list{width:37px;margin-left:24px}

/* title bar */
.titlebar{height:46px;border-bottom:2px solid #555;border-radius:10px 10px 0 0;background:linear-gradient(#efefef,#d3d3d3);display:flex;align-items:center;position:relative}
.lights{display:flex;gap:16px;margin-left:16px}
.light{width:24px;height:24px;border-radius:50%}
.red{background:radial-gradient(#4a0a08 0 22%,#f0635a 26%)}
.yellow{background:#f7bd48}
.green{background:#5fc454}
.title{position:absolute;left:1517px;top:0;height:44px;display:flex;align-items:center;gap:16px;color:#222;font-family:Inter,"Liberation Sans",sans-serif;font-size:26px}
.docicon{width:24px;height:28px}

/* header bars */
.hdr{display:flex;align-items:center;position:relative;white-space:nowrap;background:#000}
.infobar{height:51px;border-bottom:2px solid #484848;flex:none;padding-top:5px;font-size:21px}
.hbox{height:41px;display:flex;align-items:center;justify-content:center;border:2px solid #1b1b1b;border-radius:10px;background:linear-gradient(#070707,#171717);position:relative;flex:none;color:#888}
.cell{height:100%;display:flex;align-items:center;justify-content:center;border-left:2px solid #222;position:relative;flex:none}
.cell:first-child{border-left:0}
.menu{display:flex;color:#8a8a8a;flex:none}
.menu span{display:block}
.status{margin-left:20px;color:#a0a0a0;font-size:21.5px}
.grow{flex:1;justify-content:flex-start;min-width:0}
.navy{background:linear-gradient(#2a3560,#0c1020)}

.w38{width:38px}.w39{width:39px}.w40{width:40px}.w41{width:41px}.w61{width:61px}.w62{width:62px}.w63{width:63px}.w64{width:64px}.w74{width:74px}.w76{width:76px}.w78{width:78px}.w81{width:81px}.w90{width:90px}.w92{width:92px}.w95{width:95px}.w96{width:96px}.w103{width:103px}.w105{width:105px}.w116{width:116px}.w123{width:123px}.w147{width:147px}.w187{width:187px}.w233{width:233px}.w250{width:250px}.w290{width:290px}.w382{width:382px}.w384{width:384px}
.hbox.pl15,.hbox.pl6{justify-content:flex-start}
.cell.pl16,.cell.pl17,.cell.pl14{justify-content:flex-start}
.ml10{margin-left:10px}.ml11{margin-left:11px}.ml12{margin-left:12px}.ml13{margin-left:13px}.ml14{margin-left:14px}.ml16{margin-left:16px}.ml19{margin-left:19px}.ml24{margin-left:24px}.ml28{margin-left:28px}.ml30{margin-left:30px}.ml33{margin-left:33px}
.mr8{margin-right:8px}.mr14{margin-right:14px}
.pl6{padding-left:6px}.pl14{padding-left:14px}.pl15{padding-left:15px}.pl16{padding-left:16px}.pl17{padding-left:17px}
.mt2{margin-top:2px}.mt3{margin-top:3px}.mt4{margin-top:4px}.mt5{margin-top:5px}.mt10{margin-top:10px}.mt11{margin-top:11px}.mt12{margin-top:12px}.mt14{margin-top:14px}.mt15{margin-top:15px}.mt16{margin-top:16px}.mt17{margin-top:17px}.mt18{margin-top:18px}.mt21{margin-top:21px}

.ic18{width:18px;height:18px}.ic22{width:22px;height:22px}.ic24{width:24px;height:24px}.ic26{width:26px;height:26px}.ic28{width:28px;height:28px}.ic30{width:30px;height:30px}.ic32{width:32px;height:32px}

/* up/down arrows */
.ud{width:14px;height:30px;margin-left:4px;position:relative}
.ud::before,.ud::after{content:"";position:absolute;left:0;width:14px;height:13px;background:#2e2e2e}
.ud::before{top:0;clip-path:polygon(50% 0,100% 100%,0 100%)}
.ud::after{bottom:0;clip-path:polygon(0 0,100% 0,50% 100%)}
.ud-r{position:absolute;right:8px;top:50%;margin:-15px 0 0}

/* corner hatches */
.hatch{position:absolute;width:24px;height:24px;background:repeating-linear-gradient(135deg,#555 0 1px,transparent 1px 5px)}
.hatch-tr{right:0;top:0;clip-path:polygon(0 0,100% 0,100% 100%)}
.hatch-tl{left:0;bottom:0;clip-path:polygon(0 0,0 100%,100% 100%)}
.hatch-bl{left:0;bottom:0;clip-path:polygon(0 0,0 100%,100% 100%)}

/* workspace */
.workspace{flex:none;height:1868px;margin-top:1px;border-top:2px solid #484848;display:flex}
.leftblock{width:2914px;display:flex;flex-direction:column;flex:none}
.upper{height:1814px;display:flex;flex:none}
.toolcol{width:320px;flex:none;display:flex;flex-direction:column;border-right:2px solid #242424}
.toolmain{flex:1;display:flex;min-height:0}

.tabs{width:40px;flex:none;display:flex;flex-direction:column;gap:11px;padding:11px 0 0 3px}
.tab{writing-mode:vertical-rl;transform:rotate(180deg);display:flex;align-items:center;justify-content:center;border:2px solid #1c1c1c;border-left:0;border-radius:0 12px 12px 0;color:#d8d8d8;font-size:23px;line-height:1;flex:none;white-space:nowrap}
.tab-on{background:linear-gradient(270deg,#2a3560,#141a32);color:#aab;border-color:#1c2340;font-size:21.5px}
.h85{height:85px}.h105{height:105px}.h133{height:133px}.h147{height:147px}.h116{height:116px}.h184{height:184px}

.shelf{flex:1;padding:0 16px 0 17px;display:flex;flex-direction:column;min-width:0;font-size:21px}
.hd{height:44px;display:flex;align-items:center;color:#8a8a8a;font-size:22.8px;text-shadow:0 2px 2px #3a3a3a;flex:none}
.hd .grip{margin-left:auto}
.tri-d{width:14px;height:15px;background:#666;clip-path:polygon(0 0,100% 0,50% 100%);margin:-8px 12px 0 3px}
.tri-r{width:15px;height:14px;background:#666;clip-path:polygon(0 0,100% 50%,0 100%);margin:0 11px 0 3px}
.tri-w{width:20px;height:10px;background:#ddd;clip-path:polygon(0 0,100% 0,50% 100%)}
.tri-wu{width:20px;height:10px;background:#ddd;clip-path:polygon(50% 0,100% 100%,0 100%)}
.grip{width:15px;height:8px;margin-right:5px;background-image:radial-gradient(#666 45%,transparent 50%);background-size:4px 4px}

.b{height:40px;display:flex;align-items:center;padding:3px 14px 0;background:linear-gradient(#060606,#171717);border:1px solid #222;color:#8f8f8f;position:relative;white-space:nowrap;overflow:hidden;flex:none}
.solo{border-radius:9px}
.stack{display:flex;flex-direction:column;border-radius:9px;overflow:hidden;flex:none}
.pair{display:grid;grid-template-columns:1fr 1fr;border-radius:9px;overflow:hidden;flex:none}
.lab{height:32px;display:flex;align-items:center;padding-left:16px;color:#8f8f8f;flex:none}
.b.ctr{justify-content:center;padding:3px 0 0}
.b.on{background:linear-gradient(#2a3560,#0c1020);color:#fff}

.oppanel{height:433px;flex:none;border-top:2px solid #222;padding:2px 16px 0;display:flex;flex-direction:column;background:#000;font-size:21px}
.opcombo{padding-left:11px}

/* viewport */
.viewport{width:2048px;flex:none;position:relative;overflow:hidden;background:linear-gradient(#000,#1f1f1f)}
.scene3d{position:absolute;left:0;top:0}
.grid{stroke:#2b2b2b;stroke-width:2;fill:none}
.axis-r{stroke:#6b1010;stroke-width:2;fill:none}
.axis-g{stroke:#1a6a1a;stroke-width:2;fill:none}
.outline{fill:none;stroke:#ff8d1c;stroke-width:2;vector-effect:non-scaling-stroke}
.wire{fill:none;stroke:#5a5a5a;stroke-width:1.5;vector-effect:non-scaling-stroke}
.lampline{stroke:#444;stroke-width:2;fill:none}
.sun-in{fill:none;stroke:#f5e8cf;stroke-width:2;stroke-dasharray:5 8.35}
.sun-out{fill:none;stroke:#f5e8cf;stroke-width:2;stroke-dasharray:7 11.85}
.cross{stroke:#000;stroke-width:2.5;fill:none}
.cur-r{fill:none;stroke:#e01010;stroke-width:2;stroke-dasharray:14 14}
.cur-w{fill:none;stroke:#fff;stroke-width:2;stroke-dasharray:14 14;stroke-dashoffset:14}
.gz-b{stroke:#0000c0;stroke-width:4}
.gz-g{stroke:#10b010;stroke-width:4}
.gz-r{stroke:#c01010;stroke-width:5}
.vp-text{position:absolute;color:#e2e2e2;white-space:nowrap}
.vp-mode{left:38px;top:20px}
.vp-obj{left:89px;top:1777px}
.gz-l{position:absolute;font-size:20px;line-height:1}
.gz-lx{left:95px;top:1750px;color:#a01010}
.gz-ly{left:79px;top:1740px;color:#10a010}
.gz-lz{left:53px;top:1696px;color:#0a1ab0}

/* N panel */
.npanel{width:510px;flex:none;padding:0 16px;overflow:hidden;background:#000;display:flex;flex-direction:column}
.nudge{margin-top:-14px}
.namerow{display:flex;align-items:center;flex:none}
.namerow svg{margin:0 22px 0 8px}
.field{flex:1}
.chk{height:44px;display:flex;align-items:center;color:#8f8f8f;flex:none;white-space:nowrap;padding-left:6px}
.box{width:28px;height:30px;border:2px solid #2a2a2a;border-radius:8px;background:linear-gradient(#050505,#141414);margin-right:16px;flex:none}
.box.on{background:linear-gradient(#232c50,#141a32);margin:-4px 8px 0 3px;border-color:#2a3050;position:relative}
.box.on::after{content:"";position:absolute;left:5px;top:3px;width:17px;height:9px;border:solid #8a94a8;border-width:0 0 3px 3px;transform:rotate(-45deg)}
.dim{color:#4e4e4e}
.dim .box{border-color:#1a1a1a}
.sub{flex:none;border:2px solid #1f1f1f;border-radius:8px;background:#0c0c0c;padding:8px 7px 7px 8px;display:flex;flex-direction:column}
.subhead{height:44px;display:flex;align-items:center;padding:0 9px 0 11px;color:#8f8f8f}
.subhead .tri-w{margin-right:24px}
.lr{display:flex;align-items:center;justify-content:space-between}
.lrl{padding:3px 0 0 16px;color:#8a8a8a;white-space:nowrap}
.cmb{width:296px}
.seg{display:grid;border-radius:9px;overflow:hidden;flex:none}
.seg2{grid-template-columns:228px 1fr}
.seg3{grid-template-columns:153px 152px 1fr}
.imgrow{grid-template-columns:63px 270px 45px 40px 1fr}
.pathrow{grid-template-columns:39px 339px 40px 1fr}
.imgrow .b:nth-child(2),.pathrow .b:nth-child(2){padding-left:14px}
.vr{height:40px}
.slider{height:40px;border:1px solid #222;border-radius:20px;background:linear-gradient(#060606,#171717);position:relative;display:flex;align-items:center;justify-content:space-between;padding:3px 28px 0 30px;overflow:hidden;flex:none;color:#8f8f8f}
.fill{position:absolute;left:0;top:0;bottom:0;width:237px;background:linear-gradient(#2a3560,#0c1020)}
.sl-l,.sl-v{position:relative}
.inner{border:2px solid #1f1f1f;border-radius:6px;background:#0f0f0f;padding:7px 8px 8px 9px;flex:none}
.numrow{display:grid;grid-template-columns:209px 212px;justify-content:space-between}
.fliprow{height:40px}
.flip{height:40px;padding-left:5px}
.num{height:40px;border:1px solid #222;border-radius:20px;background:linear-gradient(#060606,#171717);display:flex;align-items:center;padding:3px 8px 0;color:#8f8f8f;white-space:nowrap;flex:none}
.al,.ar{width:9px;height:14px;background:#333;flex:none}
.al{clip-path:polygon(100% 0,100% 100%,0 50%);margin-right:13px}
.ar{clip-path:polygon(0 0,100% 50%,0 100%);margin-left:13px}

.nscroll{width:26px;flex:none;background:#0c0c0c;border-radius:13px 13px 0 0;display:flex;flex-direction:column;justify-content:flex-end;margin-right:10px;position:relative}
.nscroll::after{content:"";position:absolute;right:-2px;top:0;bottom:0;width:2px;background:#444}
.nthumb{height:912px;border-radius:13px 13px 0 0;background:linear-gradient(90deg,#2a2a2a,#161616)}

/* view header */
.viewhdr{flex:1;border-top:2px solid #262626;padding-top:6px}
.viewhdr .menu{font-size:21.5px;padding-left:2px}

.layers{width:100px;height:41px;border:2px solid #1b1b1b;border-radius:10px;flex:none;position:relative;overflow:hidden;background:linear-gradient(#2a2a2a,#2a2a2a) 0 18px/100% 2px no-repeat,repeating-linear-gradient(90deg,transparent 0 18px,#262626 18px 20px),linear-gradient(#070707,#171717)}
.lay-on{position:absolute;left:0;top:0;width:18px;height:18px;background:radial-gradient(circle,#e08a3a 0 30%,#1c2340 35%)}

/* right column */
.rightcol{flex:1;border-left:2px solid #484848;display:flex;flex-direction:column;min-width:0;font-size:21px}
.outliner{height:318px;flex:none;border-bottom:2px solid #484848;display:flex;flex-direction:column;position:relative}
.rhdr{height:51px;flex:none;padding-left:15px;border-bottom:2px solid #1e1e1e;padding-top:4px}
.allsc{margin-left:0;flex:1;justify-content:flex-start;padding-left:14px;border-radius:10px 0 0 10px;border-right:0}
.olist{height:235px;flex:none;overflow:hidden;position:relative;background:linear-gradient(#1c1c1c,#1c1c1c) 290px 0/2px 100% no-repeat,linear-gradient(#1c1c1c,#1c1c1c) 330px 0/2px 100% no-repeat,linear-gradient(#1c1c1c,#1c1c1c) 370px 0/2px 100% no-repeat,linear-gradient(#3a3a3a,#3a3a3a) 59px 30px/2px 205px no-repeat,#000}
.orow{height:40px;display:flex;align-items:center;padding-left:49px;color:#a8a8a8;padding-right:41px}
.orow:nth-child(even){background:rgba(255,255,255,.03)}
.orow.root{padding-left:9px;margin-top:3px}
.exp{width:20px;height:20px;border-radius:50%;position:relative;background:#ddd;flex:none}
.exp::before{content:"";position:absolute;left:4px;right:4px;top:8px;height:4px;background:#111}
.exp.plus::after{content:"";position:absolute;top:4px;bottom:4px;left:8px;width:4px;background:#111}
.exp.none{background:none}
.exp.none::before{display:none}
.oic{width:32px;height:36px;margin-left:15px;display:flex;align-items:center;justify-content:center;border-radius:50%;flex:none}
.halo{background:#555}
.brown{background:#7a4213}
.oname{flex:1;min-width:0;overflow:hidden;white-space:nowrap;margin:0 8px 0 8px;color:#b0b0b0}
.dimmer{color:#999}
.bright{color:#fff}
.oex{margin:0 8px 0 -40px}
.vis{display:flex;gap:13px}
.ovscroll{position:absolute;left:411px;top:9px;width:24px;height:179px;border-radius:12px;background:#141414}
.ohscroll{flex:1;position:relative;padding:0 45px 8px 8px}
.ohthumb{height:24px;border-radius:12px;background:linear-gradient(#262626,#101010);border-right:90px solid #0b0b0b}
.props{flex:1;display:flex;flex-direction:column;position:relative;min-height:0;font-size:21.2px}
.phdr{height:58px;padding-top:6px}
.ptabs{display:flex;margin-left:18px;height:41px;border-radius:10px 0 0 10px;overflow:hidden;background:#141414;flex:1}
.ptab{width:40px;flex:none;display:flex;align-items:center;justify-content:center;border-right:1px solid #2a2a2a}
.ptab.active{background:linear-gradient(#0c1020,#1a2240)}
.crumbs{height:70px;display:flex;align-items:center;padding-left:22px;color:#8f8f8f;flex:none}
.crumb-tri{width:8px;height:14px;background:#444;clip-path:polygon(0 0,100% 50%,0 100%);margin-left:16px}
.pbody{padding:0 17px;display:flex;flex-direction:column}
.modifier{height:324px;border:2px solid #1f1f1f;border-radius:8px;background:#111;display:flex;flex-direction:column;flex:none}
.modhead{height:58px;flex:none;border-bottom:2px solid #232323;display:flex;align-items:center;padding-left:15px}
.bo{width:60px;margin-left:19px}
.camvis{grid-template-columns:39px 38px;margin-left:16px}
.updown{grid-template-columns:38px 38px;margin-left:18px}
.modx{margin-left:22px}
.modbody{padding:10px 7px;display:flex;flex-direction:column}
.twin{display:grid;grid-template-columns:187px 187px;justify-content:space-between;align-items:center}
.labs{height:24px;margin:26px 0 11px;color:#8a8a8a}
.labs span{padding-left:15px}
.solverlab{padding-left:15px;color:#8a8a8a}
.objf{padding-right:10px}
.num.wide{padding:3px 12px 0;justify-content:flex-start}
.num.wide .al{margin-right:11px}
.num.wide .ar{margin-left:10px}

/* dock */
.dockrow{flex:1;display:flex;justify-content:center;margin-top:-1px;min-height:0}
.dock{width:994px;background:#565456;border-radius:12px 12px 0 0;padding:11px 5px 0;display:flex}
.app{width:68px;display:flex;flex-direction:column;align-items:center;position:relative;flex:none}
.app svg{width:60px;height:60px}
.run,.none-dot{width:6px;height:6px;border-radius:50%;margin-top:5px}
.run{background:#000}
.pill{width:62px;height:8px;margin-top:4px;border:2px solid #000;border-radius:4px;background:#333}
.badge{position:absolute;top:-1px;width:26px;height:26px;border-radius:50%;background:#e0443a;color:#fff;font:400 16px/26px Inter,sans-serif;text-align:center}
.badge-mail{right:-2px}
.badge-ft{right:-2px}
.badge-pr{right:-2px}
.docksep{width:2px;height:66px;margin:8px 14px 0 17px;background:#333;flex:none}
.win{margin-right:-1px}
.cal-m{font:700 11px Inter,sans-serif;fill:#fff}
.cal-d{font:400 32px Inter,sans-serif;fill:#222}
```
